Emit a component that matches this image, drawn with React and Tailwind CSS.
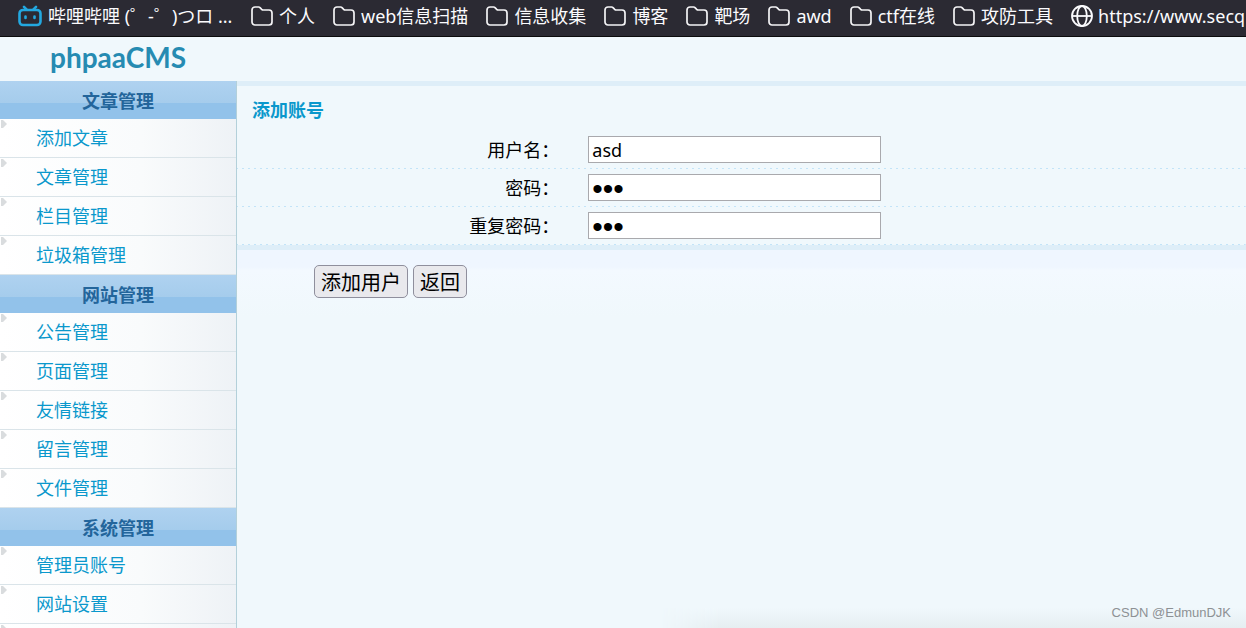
const bookmarks = ['个人', 'web信息扫描', '信息收集', '博客', '靶场', 'awd', 'ctf在线', '攻防工具'];

const menu = [
  { title: '文章管理', items: ['添加文章', '文章管理', '栏目管理', '垃圾箱管理'] },
  { title: '网站管理', items: ['公告管理', '页面管理', '友情链接', '留言管理', '文件管理'] },
  { title: '系统管理', items: ['管理员账号', '网站设置', ''] },
];

const fields = [
  { id: 'username', label: '用户名：', type: 'text', value: 'asd' },
  { id: 'password', label: '密码：', type: 'password', value: 'asd' },
  { id: 'password2', label: '重复密码：', type: 'password', value: 'asd' },
];

function FolderIcon() {
  return (
    <svg width="22" height="20" viewBox="0 0 22 20" fill="none" stroke="#f4f4f6" strokeWidth="1.7" className="shrink-0">
      <path d="M1 4a3 3 0 0 1 3-3h3.6c.6 0 1 .2 1.4.6l1.7 1.8c.4.4.8.6 1.4.6H18a3 3 0 0 1 3 3v9a3 3 0 0 1-3 3H4a3 3 0 0 1-3-3z" />
    </svg>
  );
}

function GlobeIcon() {
  return (
    <svg width="22" height="22" viewBox="0 0 22 22" fill="none" stroke="#fbfbfe" strokeWidth="1.8" className="shrink-0">
      <circle cx="11" cy="11" r="10" />
      <ellipse cx="11" cy="11" rx="4.8" ry="10" />
      <path d="M1 11h20" />
    </svg>
  );
}

function BiliIcon() {
  return (
    <svg width="24" height="22" viewBox="0 0 24 22" fill="none" stroke="#23a8e0" strokeWidth="2.6" strokeLinecap="round" className="shrink-0">
      <path d="M6 1.8 8.5 4.3M18 1.8l-2.5 2.5" />
      <rect x="1.5" y="5" width="21" height="15" rx="3.5" />
      <path d="M7.5 11.5v1.5M16.5 11.5v1.5" />
    </svg>
  );
}

function BookmarkBar() {
  return (
    <nav className="flex h-[37px] shrink-0 items-center gap-[18px] overflow-hidden border-b border-[#0c0c0d] bg-[#2b2a33] pb-1 pl-[18px] whitespace-nowrap text-[#fbfbfe]">
      <a href="#bili" className="flex items-center gap-[6px]">
        <BiliIcon />
        <span className="w-[185px]">哔哩哔哩 (゜-゜)つロ ...</span>
      </a>
      {bookmarks.map((name) => (
        <a key={name} href="#folder" className="flex items-center gap-[6px]">
          <FolderIcon />
          {name}
        </a>
      ))}
      <a href="#secq" className="flex items-center gap-[5px]">
        <GlobeIcon />
        https://www.secq
      </a>
    </nav>
  );
}

function Sidebar() {
  return (
    <aside className="w-[237px] shrink-0 overflow-hidden border-r border-[#b3d0da] bg-[#f1f4f8]">
      {menu.map((group) => (
        <section key={group.title}>
          <h2 className="h-[38px] bg-linear-to-b from-[#afd2f0] from-0% via-[#a5ccec] via-58% to-[#92c2ea] to-58% text-center leading-10 font-bold text-[#23659b]">
            {group.title}
          </h2>
          <ul>
            {group.items.map((item) => (
              <li key={item} className="flex h-[39px] border-b border-[#dae4e9] bg-linear-to-r from-white via-[#f9fbfc] via-60% to-[#eef2f6]">
                <svg width="8" height="10" viewBox="0 0 8 10" className="mr-7 shrink-0">
                  <path d="M1 1h2l4 4-4 4H1z" fill="#d9dcde" />
                </svg>
                <a href="#menu" className="leading-[38px] text-[#0a98cc]">{item}</a>
              </li>
            ))}
          </ul>
        </section>
      ))}
    </aside>
  );
}

export default function App() {
  return (
    <div className="relative flex h-screen flex-col overflow-hidden bg-[#f0f8fc] font-['Noto_Sans','Noto_Sans_CJK_SC',sans-serif] text-[18px] leading-[26px] text-black">
      <BookmarkBar />
      <header className="h-11 shrink-0 pl-[50px]">
        <h1 className="font-['Lato',sans-serif] text-[28px] leading-10 font-bold text-[#268bb2]">phpaaCMS</h1>
      </header>
      <div className="flex min-h-0 flex-1">
        <Sidebar />
        <main className="flex min-w-0 flex-1 flex-col justify-between border-t-[5px] border-[#deeef8]">
          <form onSubmit={(e) => e.preventDefault()}>
            <h2 className="h-[45px] pl-[15px] leading-[48px] font-bold text-[#0a98cc]">添加账号</h2>
            <table className="w-full table-fixed">
              <tbody>
                {fields.map((field) => (
                  <tr
                    key={field.id}
                    className="h-[38px] bg-[repeating-linear-gradient(90deg,#c3e4f8_0_1px,transparent_1px_5px,#c3e4f8_5px_6px)] bg-[length:100%_1px] bg-bottom bg-no-repeat"
                  >
                    <th className="w-1/3 p-0 pr-[14px] text-right font-normal">
                      <label htmlFor={field.id}>{field.label}</label>
                    </th>
                    <td className="p-0 pb-px pl-[15px]">
                      <input
                        id={field.id}
                        type={field.type}
                        defaultValue={field.value}
                        className={`block h-[27px] w-[293px] border border-[#a9a9ad] bg-white px-[3px] ${
                          field.type === 'password' ? "pt-[2px] font-['Liberation_Sans',sans-serif] text-[30px]" : ''
                        }`}
                      />
                    </td>
                  </tr>
                ))}
              </tbody>
            </table>
            <div className="flex gap-[5px] border-t-[5px] border-[#deeef8] bg-linear-to-b from-[#eff6ff] from-25% via-[#f3f9ff] via-30% to-[#f0f8fc] pt-[15px] pb-5 pl-[77px] text-[20px]">
              <button type="submit" className="h-[33px] rounded-[5px] border border-[#8f8f9d] bg-[#e9e9ed] px-[6px] pt-[2px]">添加用户</button>
              <button type="button" className="h-[33px] rounded-[5px] border border-[#8f8f9d] bg-[#e9e9ed] px-[6px] pt-[2px]">返回</button>
            </div>
          </form>
          <div className="ml-[42%] h-5 bg-linear-to-b from-[#f0f8fc] to-[#e6eef1] mask-l-from-90%" />
        </main>
      </div>
      <span className="absolute right-[15px] bottom-[5px] font-['Liberation_Sans',sans-serif] text-[13px] leading-5 text-[#8d9194]">CSDN @EdmunDJK</span>
    </div>
  );
}
